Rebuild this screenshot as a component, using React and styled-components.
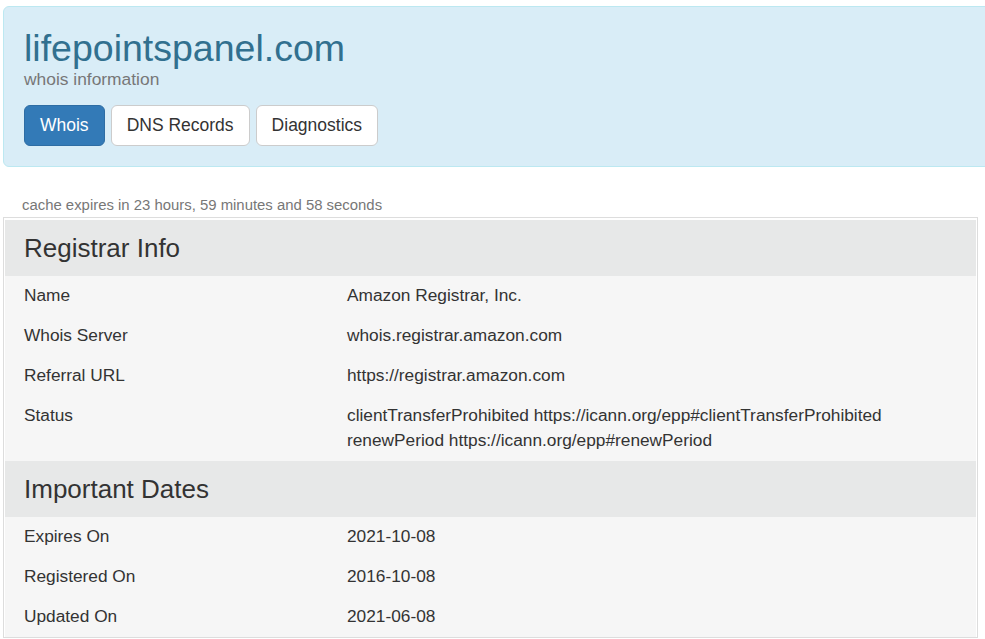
import React from 'react';
import styled, { createGlobalStyle } from 'styled-components';

const GlobalStyle = createGlobalStyle`
  html, body {
    margin: 0;
    padding: 0;
    background: #fff;
    overflow-x: hidden;
  }
  body {
    font-family: "Liberation Sans", Arial, sans-serif;
    font-size: 16px;
    color: #333;
  }
`;

const Page = styled.div`
  padding: 6px 0 0 3px;
`;

const Jumbotron = styled.header`
  margin-right: -20px;
  height: 161px;
  box-sizing: border-box;
  padding: 21px 20px 0 20px;
  background: #d9edf7;
  border: 1px solid #bce8f1;
  border-radius: 6px;
`;

const Title = styled.h1`
  margin: 0;
  font-size: 37.5px;
  font-weight: 400;
  line-height: 40px;
  color: #31708f;
`;

const Subtitle = styled.div`
  font-size: 17.4px;
  line-height: 24px;
  color: #777;
  margin-top: -1px;
`;

const Tabs = styled.nav`
  display: flex;
  gap: 6px;
  margin-top: 14px;
`;

const Tab = styled.button`
  font-family: inherit;
  font-size: 17.5px;
  line-height: 23px;
  padding: 8px 15px;
  border-radius: 6px;
  border: 1px solid ${(p) => (p.$active ? '#2e6da4' : '#ccc')};
  background: ${(p) => (p.$active ? '#337ab7' : '#fff')};
  color: ${(p) => (p.$active ? '#fff' : '#333')};
  cursor: pointer;
`;

const Cache = styled.div`
  margin: 28px 0 0 19px;
  font-size: 14.9px;
  line-height: 20px;
  color: #777;
`;

const Table = styled.div`
  width: 975px;
  box-sizing: border-box;
  border: 1px solid #ddd;
  padding: 2px 1px 0 1px;
  margin-top: 2px;
`;

const SectionHead = styled.div`
  background: #e7e8e8;
  font-size: 26px;
  line-height: 26px;
  padding: 15px 19px;
`;

const Row = styled.div`
  display: grid;
  grid-template-columns: 323px 1fr;
  background: #f6f6f6;
  font-size: 17.3px;
  line-height: 25px;
  padding: 7px 0 8px 19px;
`;

const Value = styled.div`
  white-space: pre-line;
`;

const sections = [
  {
    title: 'Registrar Info',
    rows: [
      ['Name', 'Amazon Registrar, Inc.'],
      ['Whois Server', 'whois.registrar.amazon.com'],
      ['Referral URL', 'https://registrar.amazon.com'],
      [
        'Status',
        'clientTransferProhibited https://icann.org/epp#clientTransferProhibited\nrenewPeriod https://icann.org/epp#renewPeriod',
      ],
    ],
  },
  {
    title: 'Important Dates',
    rows: [
      ['Expires On', '2021-10-08'],
      ['Registered On', '2016-10-08'],
      ['Updated On', '2021-06-08'],
    ],
  },
];

const App = () => (
  <>
    <GlobalStyle />
    <Page>
      <Jumbotron>
        <Title>lifepointspanel.com</Title>
        <Subtitle>whois information</Subtitle>
        <Tabs>
          <Tab $active>Whois</Tab>
          <Tab>DNS Records</Tab>
          <Tab>Diagnostics</Tab>
        </Tabs>
      </Jumbotron>
      <Cache>cache expires in 23 hours, 59 minutes and 58 seconds</Cache>
      <Table>
        {sections.map((section) => (
          <section key={section.title}>
            <SectionHead>{section.title}</SectionHead>
            {section.rows.map(([label, value]) => (
              <Row key={label}>
                <div>{label}</div>
                <Value>{value}</Value>
              </Row>
            ))}
          </section>
        ))}
      </Table>
    </Page>
  </>
);

export default App;
